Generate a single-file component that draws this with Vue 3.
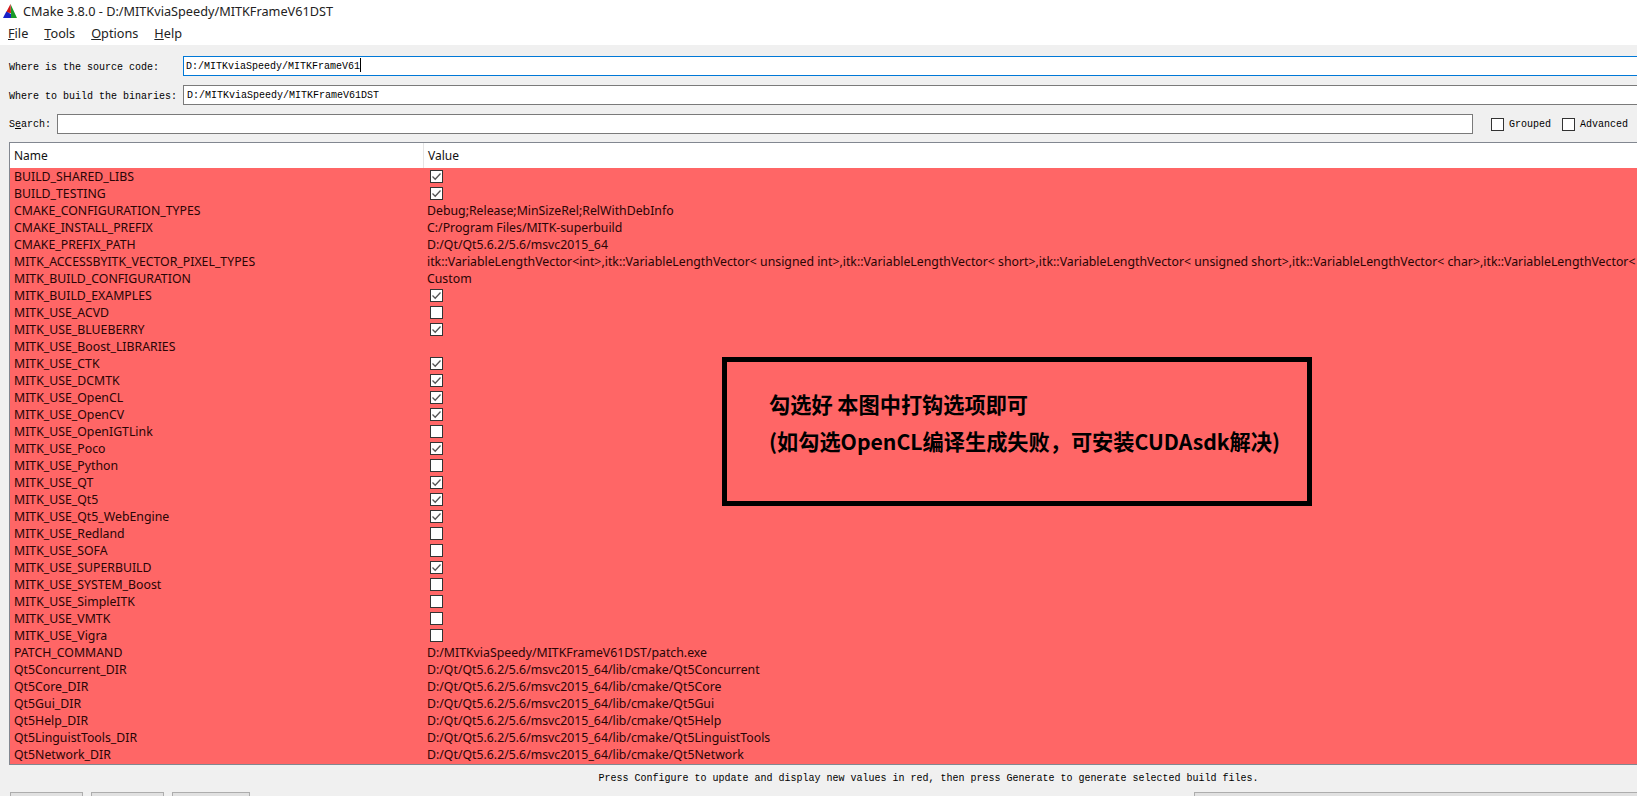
<script setup>
const rows = [
  { name: 'BUILD_SHARED_LIBS', check: true },
  { name: 'BUILD_TESTING', check: true },
  { name: 'CMAKE_CONFIGURATION_TYPES', value: 'Debug;Release;MinSizeRel;RelWithDebInfo' },
  { name: 'CMAKE_INSTALL_PREFIX', value: 'C:/Program Files/MITK-superbuild' },
  { name: 'CMAKE_PREFIX_PATH', value: 'D:/Qt/Qt5.6.2/5.6/msvc2015_64' },
  { name: 'MITK_ACCESSBYITK_VECTOR_PIXEL_TYPES', value: 'itk::VariableLengthVector<int>,itk::VariableLengthVector< unsigned int>,itk::VariableLengthVector< short>,itk::VariableLengthVector< unsigned short>,itk::VariableLengthVector< char>,itk::VariableLengthVector< unsigned char>' },
  { name: 'MITK_BUILD_CONFIGURATION', value: 'Custom' },
  { name: 'MITK_BUILD_EXAMPLES', check: true },
  { name: 'MITK_USE_ACVD', check: false },
  { name: 'MITK_USE_BLUEBERRY', check: true },
  { name: 'MITK_USE_Boost_LIBRARIES', value: '' },
  { name: 'MITK_USE_CTK', check: true },
  { name: 'MITK_USE_DCMTK', check: true },
  { name: 'MITK_USE_OpenCL', check: true },
  { name: 'MITK_USE_OpenCV', check: true },
  { name: 'MITK_USE_OpenIGTLink', check: false },
  { name: 'MITK_USE_Poco', check: true },
  { name: 'MITK_USE_Python', check: false },
  { name: 'MITK_USE_QT', check: true },
  { name: 'MITK_USE_Qt5', check: true },
  { name: 'MITK_USE_Qt5_WebEngine', check: true },
  { name: 'MITK_USE_Redland', check: false },
  { name: 'MITK_USE_SOFA', check: false },
  { name: 'MITK_USE_SUPERBUILD', check: true },
  { name: 'MITK_USE_SYSTEM_Boost', check: false },
  { name: 'MITK_USE_SimpleITK', check: false },
  { name: 'MITK_USE_VMTK', check: false },
  { name: 'MITK_USE_Vigra', check: false },
  { name: 'PATCH_COMMAND', value: 'D:/MITKviaSpeedy/MITKFrameV61DST/patch.exe' },
  { name: 'Qt5Concurrent_DIR', value: 'D:/Qt/Qt5.6.2/5.6/msvc2015_64/lib/cmake/Qt5Concurrent' },
  { name: 'Qt5Core_DIR', value: 'D:/Qt/Qt5.6.2/5.6/msvc2015_64/lib/cmake/Qt5Core' },
  { name: 'Qt5Gui_DIR', value: 'D:/Qt/Qt5.6.2/5.6/msvc2015_64/lib/cmake/Qt5Gui' },
  { name: 'Qt5Help_DIR', value: 'D:/Qt/Qt5.6.2/5.6/msvc2015_64/lib/cmake/Qt5Help' },
  { name: 'Qt5LinguistTools_DIR', value: 'D:/Qt/Qt5.6.2/5.6/msvc2015_64/lib/cmake/Qt5LinguistTools' },
  { name: 'Qt5Network_DIR', value: 'D:/Qt/Qt5.6.2/5.6/msvc2015_64/lib/cmake/Qt5Network' },
]
</script>

<template>
  <div class="window">
    <div class="titlebar">
      <svg class="logo" width="16" height="16" viewBox="0 0 16 16">
        <polygon points="8.5,1 15,15 8.5,15 9,9" fill="#1a9a2a" />
        <polygon points="8.5,1 4,9.5 9,10" fill="#d01818" />
        <polygon points="1,15 4.3,8.5 9,11 9,15" fill="#1a22c8" />
      </svg>
      <span>CMake 3.8.0 - D:/MITKviaSpeedy/MITKFrameV61DST</span>
    </div>
    <div class="menubar">
      <span><u>F</u>ile</span>
      <span><u>T</u>ools</span>
      <span><u>O</u>ptions</span>
      <span><u>H</u>elp</span>
    </div>
    <div class="body">
      <div class="form-row first">
        <label class="mono path-label">Where is the source code:</label>
        <div class="field focus mono">D:/MITKviaSpeedy/MITKFrameV61<i class="caret"></i></div>
      </div>
      <div class="form-row second">
        <label class="mono path-label">Where to build the binaries:</label>
        <div class="field mono">D:/MITKviaSpeedy/MITKFrameV61DST</div>
      </div>
      <div class="form-row third">
        <label class="mono search-label">S<u>e</u>arch:</label>
        <div class="field search"></div>
        <div class="opts mono">
          <span class="opt"><i class="box"></i>Grouped</span>
          <span class="opt"><i class="box"></i>Advanced</span>
        </div>
      </div>

      <div class="table">
        <div class="thead">
          <div class="col-name">Name</div>
          <div class="col-value">Value</div>
        </div>
        <div class="tbody">
          <div class="row" v-for="r in rows" :key="r.name">
            <div class="col-name">{{ r.name }}</div>
            <div class="col-value">
              <span v-if="r.check !== undefined" class="cell-box">
                <svg v-if="r.check" width="11" height="11" viewBox="0 0 11 11">
                  <path d="M1.5 5.5 L4.2 8.2 L9.5 2.5" fill="none" stroke="#555" stroke-width="1.3" />
                </svg>
              </span>
              <template v-else>{{ r.value }}</template>
            </div>
          </div>
        </div>
        <div class="note">
          <p>勾选好 本图中打钩选项即可</p>
          <p>(如勾选OpenCL编译生成失败，可安装CUDAsdk解决)</p>
        </div>
      </div>

      <div class="status mono">Press Configure to update and display new values in red, then press Generate to generate selected build files.</div>
      <div class="buttons">
        <div class="btn b1"></div>
        <div class="btn b1"></div>
        <div class="btn b2"></div>
        <div class="btn wide"></div>
      </div>
    </div>
  </div>
</template>

<style>
html, body { margin: 0; overflow: hidden; background: #f0f0f0; }
</style>

<style scoped>
.window {
  width: 1637px;
  height: 796px;
  overflow: hidden;
  background: #f0f0f0;
  font-family: "Noto Sans", "Open Sans", sans-serif;
  color: #111;
}
.titlebar {
  height: 22px;
  background: #fff;
  display: flex;
  align-items: center;
  gap: 5px;
  padding-left: 2px;
  font-size: 12.7px;
  color: #222;
}
.logo { flex: none; }
.menubar {
  height: 23px;
  background: #fff;
  display: flex;
  gap: 16px;
  padding-left: 8px;
  font-size: 12.7px;
  line-height: 22px;
  color: #222;
}
.mono {
  font-family: "Liberation Mono", "DejaVu Sans Mono", monospace;
  font-size: 10px;
  color: #000;
}
.form-row {
  display: flex;
  align-items: center;
  height: 20px;
  padding-left: 9px;
}
.first { margin-top: 11px; }
.second { margin-top: 9px; }
.third { margin-top: 9px; }
.path-label { width: 174px; flex: none; }
.first .path-label { padding-top: 3px; }
.second .path-label { padding-top: 2px; }
.search-label { width: 48px; flex: none; }
.field {
  flex: 1;
  height: 20px;
  box-sizing: border-box;
  background: #fff;
  border: 1px solid #7a7a7a;
  margin-right: -10px;
  padding-left: 3px;
  line-height: 19px;
  white-space: nowrap;
}
.field.focus { border-color: #0078d7; padding-left: 2px; line-height: 20px; }
.caret {
  display: inline-block;
  width: 1px;
  height: 14px;
  background: #000;
  vertical-align: -3px;
}
.field.search {
  flex: none;
  width: 1416px;
  margin-right: 0;
}
.opts {
  display: flex;
  gap: 11px;
  margin-left: 18px;
  white-space: nowrap;
}
.opt { display: flex; align-items: center; gap: 5px; }
.box {
  width: 13px;
  height: 13px;
  box-sizing: border-box;
  border: 1px solid #333;
  background: #fff;
}
.table {
  position: relative;
  margin: 8px -10px 0 9px;
  height: 623px;
  box-sizing: border-box;
  border: 1px solid #828790;
  background: #fff;
}
.thead {
  height: 25px;
  display: flex;
  align-items: center;
  font-size: 12px;
  background: #fff;
}
.col-name {
  width: 414px;
  flex: none;
  padding-left: 4px;
  box-sizing: border-box;
  font-size: 12.3px;
}
.col-value {
  flex: 1;
  padding-left: 3px;
  white-space: nowrap;
  overflow: hidden;
  display: flex;
  align-items: center;
  font-size: 12.3px;
}
.thead .col-name { padding-left: 4px; height: 100%; line-height: 25px; border-right: 1px solid #e5e5e5; font-size: 12px; }
.thead .col-value { padding-left: 4px; font-size: 12px; }
.tbody { background: #ff6666; height: 596px; }
.row {
  height: 17px;
  display: flex;
  align-items: center;
  line-height: 17px;
  color: #2a0505;
  overflow: hidden;
}
.cell-box {
  width: 13px;
  height: 13px;
  flex: none;
  box-sizing: border-box;
  margin-left: 3px;
  border: 1px solid #333;
  background: #fff;
  display: flex;
  align-items: center;
  justify-content: center;
}
.note {
  position: absolute;
  left: 712px;
  top: 214px;
  width: 590px;
  height: 149px;
  box-sizing: border-box;
  border: 5px solid #000;
  padding: 26px 0 0 42px;
  font-family: "Noto Sans CJK SC", "Noto Sans", sans-serif;
  font-size: 21.2px;
  font-weight: 700;
  color: #000;
}
.note p { margin: 0 0 6px; line-height: 31px; white-space: nowrap; }
.status {
  text-align: center;
  height: 27px;
  line-height: 28px;
  padding-left: 220px;
}
.buttons {
  display: flex;
  gap: 8px;
  padding-left: 10px;
}
.btn {
  height: 24px;
  flex: none;
  box-sizing: border-box;
  border: 1px solid #adadad;
  background: #e1e1e1;
}
.b1 { width: 73px; }
.b2 { width: 78px; }
.wide { width: 500px; margin-left: 936px; }
</style>
